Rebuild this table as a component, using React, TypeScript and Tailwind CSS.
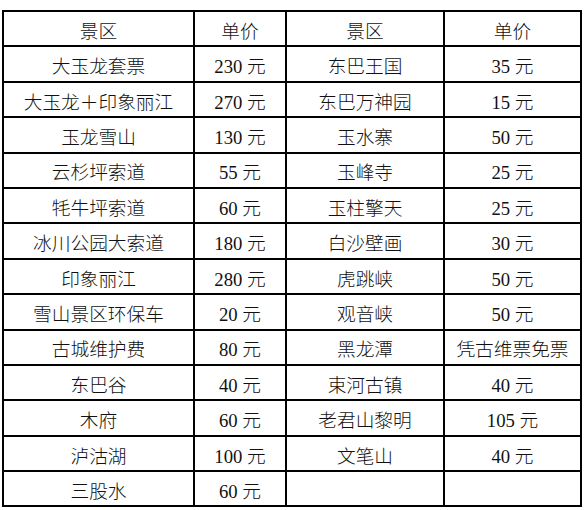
import React from "react";

const rows: [string, string, string, string][] = [
  ["景区", "单价", "景区", "单价"],
  ["大玉龙套票", "230 元", "东巴王国", "35 元"],
  ["大玉龙＋印象丽江", "270 元", "东巴万神园", "15 元"],
  ["玉龙雪山", "130 元", "玉水寨", "50 元"],
  ["云杉坪索道", "55 元", "玉峰寺", "25 元"],
  ["牦牛坪索道", "60 元", "玉柱擎天", "25 元"],
  ["冰川公园大索道", "180 元", "白沙壁画", "30 元"],
  ["印象丽江", "280 元", "虎跳峡", "50 元"],
  ["雪山景区环保车", "20 元", "观音峡", "50 元"],
  ["古城维护费", "80 元", "黑龙潭", "凭古维票免票"],
  ["东巴谷", "40 元", "束河古镇", "40 元"],
  ["木府", "60 元", "老君山黎明", "105 元"],
  ["泸沽湖", "100 元", "文笔山", "40 元"],
  ["三股水", "60 元", "", ""],
];

export default function App() {
  return (
    <div
      className="w-[586px] h-[510px] bg-white pt-[10px] pl-[2px] text-[18.7px] font-light text-[#111]"
      style={{ fontFamily: '"Liberation Serif", "Noto Sans CJK SC", serif' }}
    >
      {/* black background shows through the gaps as grid lines */}
      <div className="w-[580px] bg-black p-[2px] grid grid-cols-[189px_90px_156px_135px] auto-rows-[33.4px] gap-[2px]">
        {rows.map((r, i) =>
          r.map((cell, j) => (
            <div
              key={i + "-" + j}
              className="bg-white flex items-center justify-center pt-[7px] leading-none whitespace-nowrap"
            >
              {cell}
            </div>
          ))
        )}
      </div>
    </div>
  );
}
